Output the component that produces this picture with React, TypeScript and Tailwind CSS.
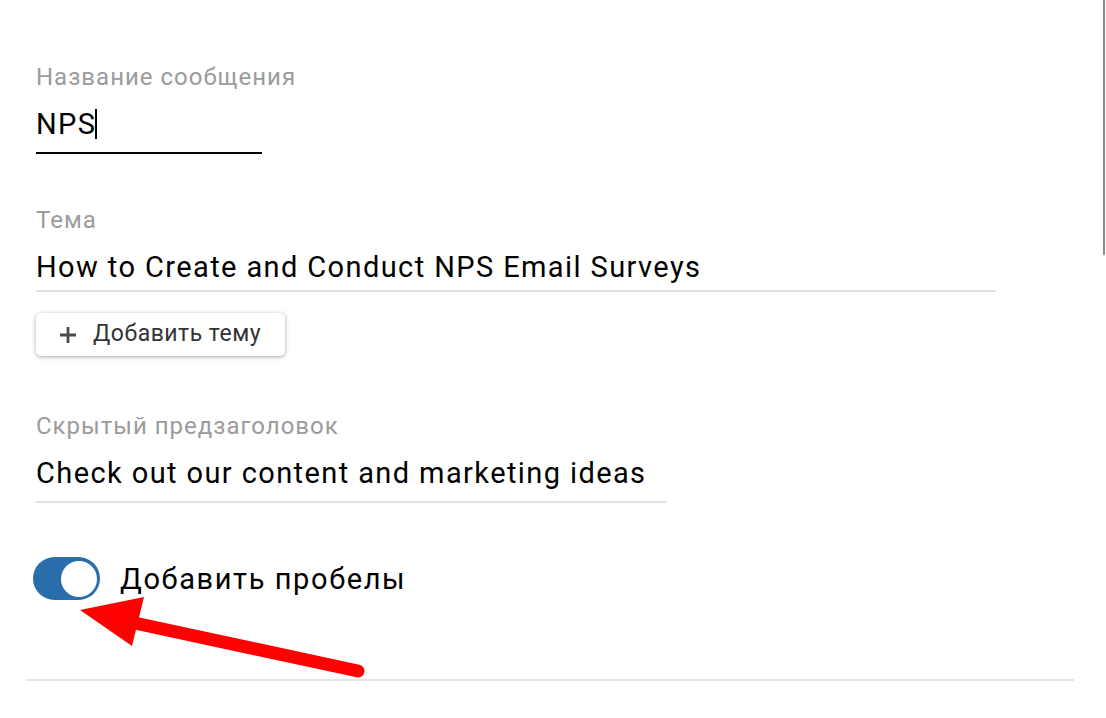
import React from "react";

const font = { fontFamily: "Roboto, 'Noto Sans', sans-serif" };

function Field({
    label,
    value,
    width,
    active,
    pad = "pb-[10px]",
}: {
    label: string;
    value: string;
    width: string;
    active?: boolean;
    pad?: string;
}) {
    return (
        <div className={`flex flex-col ${width}`}>
            <span className="text-[24px] leading-6 tracking-[1px] text-[#9b9b9b] whitespace-nowrap">{label}</span>
            <div
                className={`mt-[17px] ${pad} flex items-center text-[29px] leading-9 tracking-[1.4px] text-black whitespace-nowrap ${
                    active ? "border-b-2 border-black" : "border-b-2 border-[#e0e0e0]"
                }`}
            >
                <span>{value}</span>
                {active && <span className="-ml-[1px] w-[2px] h-[30px] bg-black" />}
            </div>
        </div>
    );
}

export default function App() {
    return (
        <div className="relative w-[1106px] h-[718px] bg-white overflow-hidden" style={font}>
            {/* scrollbar thumb */}
            <div className="absolute right-[1px] top-0 w-[2px] h-[255px] bg-[#8a8a8a]" />

            <div className="flex flex-col pl-[36px] pt-[65px]">
                <Field label="Название сообщения" value="NPS" width="w-[226px]" active />

                <div className="mt-[54px]">
                    <Field
                        label="Тема"
                        value="How to Create and Conduct NPS Email Surveys"
                        width="w-[960px]"
                        pad="pb-[5px]"
                    />
                </div>

                <button className="mt-[21px] w-[249px] h-[43px] flex items-center gap-[16px] pl-[23px] rounded-[5px] bg-white shadow-[0_1px_4px_rgba(0,0,0,0.35)] text-[23px] tracking-[0.5px] text-[#333]">
                    <svg width="18" height="18" viewBox="0 0 18 18">
                        <path d="M9 1v16M1 9h16" stroke="#4a4a4a" strokeWidth="2.8" />
                    </svg>
                    <span>Добавить тему</span>
                </button>

                <div className="mt-[58px]">
                    <Field
                        label="Скрытый предзаголовок"
                        value="Check out our content and marketing ideas"
                        width="w-[630px]"
                    />
                </div>

                <div className="mt-[54px] flex items-center gap-[20px] -ml-[3px]">
                    <div className="w-[67px] h-[43px] rounded-full bg-[#2a6dab] flex items-center justify-end pr-[3px]">
                        <div className="w-[36px] h-[36px] rounded-full bg-white" />
                    </div>
                    <span className="text-[29px] leading-9 tracking-[1.6px] text-black">Добавить пробелы</span>
                </div>
            </div>

            {/* divider */}
            <div className="absolute left-[26px] top-[679px] w-[1048px] h-[2px] bg-[#e6e6e6]" />

            {/* red annotation arrow */}
            <svg className="absolute left-0 top-0" width="1106" height="718">
                <line x1="130" y1="622" x2="358" y2="671" stroke="#ff0000" strokeWidth="13" strokeLinecap="round" />
                <polygon points="80,610 144,597 132,646" fill="#ff0000" />
            </svg>
        </div>
    );
}
